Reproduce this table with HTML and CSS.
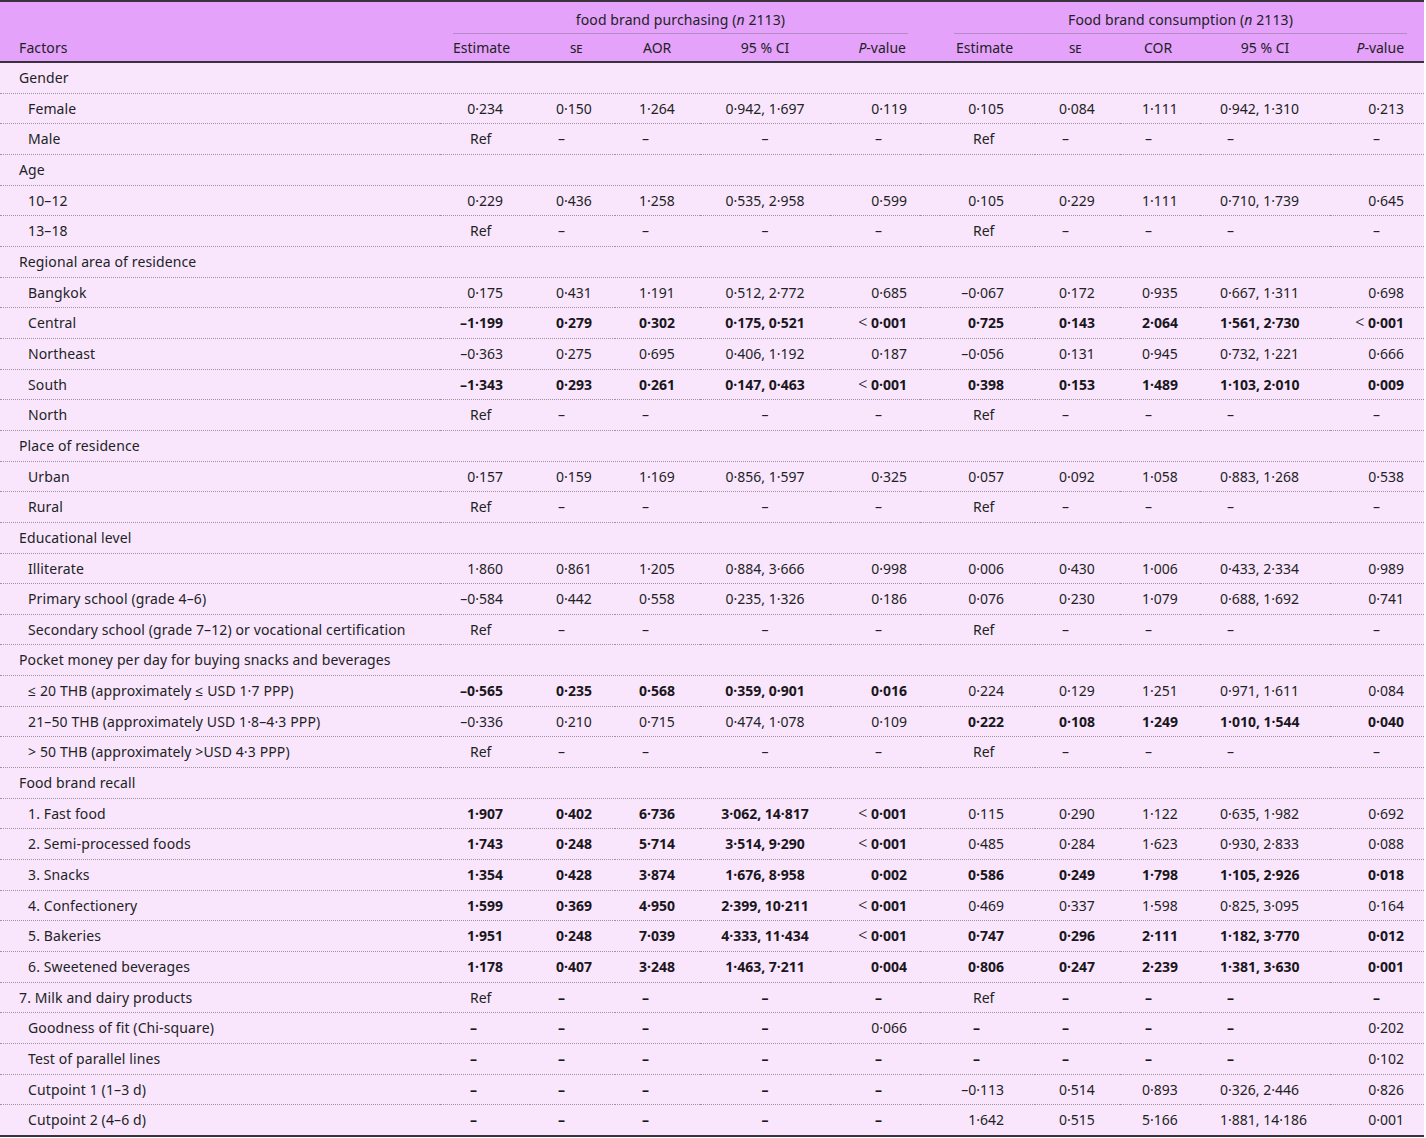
FILE: index.html
```html
<!DOCTYPE html>
<html lang="en">
<head>
<meta charset="utf-8">
<title>Factors associated with food brand purchasing and consumption</title>
<link rel="stylesheet" href="styles.css">
</head>
<body>
<table class="tbl">
<colgroup>
<col class="w-f"><col class="w-e1"><col class="w-s1"><col class="w-a1"><col class="w-c1"><col class="w-p1"><col class="w-g"><col class="w-e2"><col class="w-s2"><col class="w-a2"><col class="w-c2"><col class="w-p2">
</colgroup>
<thead>
<tr class="h1">
<th></th>
<th colspan="5" class="grp"><div class="grp-in g1">food brand purchasing (<i>n</i> 2113)</div></th>
<th></th>
<th colspan="5" class="grp"><div class="grp-in g2">Food brand consumption (<i>n</i> 2113)</div></th>
</tr>
<tr class="h2">
<th class="f hl">Factors</th>
<th class="he1">Estimate</th>
<th class="hs1"><span class="sc">se</span></th>
<th class="ha1">AOR</th>
<th class="hc">95 % CI</th>
<th class="hp1"><i>P</i>-value</th>
<th></th>
<th class="he2">Estimate</th>
<th class="hs2"><span class="sc">se</span></th>
<th class="ha2">COR</th>
<th class="hc">95 % CI</th>
<th class="hp2"><i>P</i>-value</th>
</tr>
</thead>
<tbody>
<tr><td class="f" colspan="12">Gender</td></tr>
<tr><td class="f i">Female</td><td class="e1">0·234</td><td class="s1">0·150</td><td class="a1">1·264</td><td class="c1">0·942, 1·697</td><td class="p1">0·119</td><td></td><td class="e2">0·105</td><td class="s2">0·084</td><td class="a2">1·111</td><td class="c2">0·942, 1·310</td><td class="p2">0·213</td></tr>
<tr><td class="f i">Male</td><td class="e1 d">Ref</td><td class="s1 d">–</td><td class="a1 d">–</td><td class="c1">–</td><td class="p1 d">–</td><td></td><td class="e2 d">Ref</td><td class="s2 d">–</td><td class="a2 d">–</td><td class="c2 d">–</td><td class="p2 d">–</td></tr>
<tr><td class="f" colspan="12">Age</td></tr>
<tr><td class="f i">10–12</td><td class="e1">0·229</td><td class="s1">0·436</td><td class="a1">1·258</td><td class="c1">0·535, 2·958</td><td class="p1">0·599</td><td></td><td class="e2">0·105</td><td class="s2">0·229</td><td class="a2">1·111</td><td class="c2">0·710, 1·739</td><td class="p2">0·645</td></tr>
<tr><td class="f i">13–18</td><td class="e1 d">Ref</td><td class="s1 d">–</td><td class="a1 d">–</td><td class="c1">–</td><td class="p1 d">–</td><td></td><td class="e2 d">Ref</td><td class="s2 d">–</td><td class="a2 d">–</td><td class="c2 d">–</td><td class="p2 d">–</td></tr>
<tr><td class="f" colspan="12">Regional area of residence</td></tr>
<tr><td class="f i">Bangkok</td><td class="e1">0·175</td><td class="s1">0·431</td><td class="a1">1·191</td><td class="c1">0·512, 2·772</td><td class="p1">0·685</td><td></td><td class="e2">–0·067</td><td class="s2">0·172</td><td class="a2">0·935</td><td class="c2">0·667, 1·311</td><td class="p2">0·698</td></tr>
<tr class="b"><td class="f i">Central</td><td class="e1">–1·199</td><td class="s1">0·279</td><td class="a1">0·302</td><td class="c1">0·175, 0·521</td><td class="p1"><span class="lt">&lt;</span> 0·001</td><td></td><td class="e2">0·725</td><td class="s2">0·143</td><td class="a2">2·064</td><td class="c2">1·561, 2·730</td><td class="p2"><span class="lt">&lt;</span> 0·001</td></tr>
<tr><td class="f i">Northeast</td><td class="e1">–0·363</td><td class="s1">0·275</td><td class="a1">0·695</td><td class="c1">0·406, 1·192</td><td class="p1">0·187</td><td></td><td class="e2">–0·056</td><td class="s2">0·131</td><td class="a2">0·945</td><td class="c2">0·732, 1·221</td><td class="p2">0·666</td></tr>
<tr class="b"><td class="f i">South</td><td class="e1">–1·343</td><td class="s1">0·293</td><td class="a1">0·261</td><td class="c1">0·147, 0·463</td><td class="p1"><span class="lt">&lt;</span> 0·001</td><td></td><td class="e2">0·398</td><td class="s2">0·153</td><td class="a2">1·489</td><td class="c2">1·103, 2·010</td><td class="p2">0·009</td></tr>
<tr><td class="f i">North</td><td class="e1 d">Ref</td><td class="s1 d">–</td><td class="a1 d">–</td><td class="c1">–</td><td class="p1 d">–</td><td></td><td class="e2 d">Ref</td><td class="s2 d">–</td><td class="a2 d">–</td><td class="c2 d">–</td><td class="p2 d">–</td></tr>
<tr><td class="f" colspan="12">Place of residence</td></tr>
<tr><td class="f i">Urban</td><td class="e1">0·157</td><td class="s1">0·159</td><td class="a1">1·169</td><td class="c1">0·856, 1·597</td><td class="p1">0·325</td><td></td><td class="e2">0·057</td><td class="s2">0·092</td><td class="a2">1·058</td><td class="c2">0·883, 1·268</td><td class="p2">0·538</td></tr>
<tr><td class="f i">Rural</td><td class="e1 d">Ref</td><td class="s1 d">–</td><td class="a1 d">–</td><td class="c1">–</td><td class="p1 d">–</td><td></td><td class="e2 d">Ref</td><td class="s2 d">–</td><td class="a2 d">–</td><td class="c2 d">–</td><td class="p2 d">–</td></tr>
<tr><td class="f" colspan="12">Educational level</td></tr>
<tr><td class="f i">Illiterate</td><td class="e1">1·860</td><td class="s1">0·861</td><td class="a1">1·205</td><td class="c1">0·884, 3·666</td><td class="p1">0·998</td><td></td><td class="e2">0·006</td><td class="s2">0·430</td><td class="a2">1·006</td><td class="c2">0·433, 2·334</td><td class="p2">0·989</td></tr>
<tr><td class="f i">Primary school (grade 4–6)</td><td class="e1">–0·584</td><td class="s1">0·442</td><td class="a1">0·558</td><td class="c1">0·235, 1·326</td><td class="p1">0·186</td><td></td><td class="e2">0·076</td><td class="s2">0·230</td><td class="a2">1·079</td><td class="c2">0·688, 1·692</td><td class="p2">0·741</td></tr>
<tr><td class="f i">Secondary school (grade 7–12) or vocational certification</td><td class="e1 d">Ref</td><td class="s1 d">–</td><td class="a1 d">–</td><td class="c1">–</td><td class="p1 d">–</td><td></td><td class="e2 d">Ref</td><td class="s2 d">–</td><td class="a2 d">–</td><td class="c2 d">–</td><td class="p2 d">–</td></tr>
<tr><td class="f" colspan="12">Pocket money per day for buying snacks and beverages</td></tr>
<tr><td class="f i">≤ 20 THB (approximately ≤ USD 1·7 PPP)</td><td class="e1 b">–0·565</td><td class="s1 b">0·235</td><td class="a1 b">0·568</td><td class="c1 b">0·359, 0·901</td><td class="p1 b">0·016</td><td></td><td class="e2">0·224</td><td class="s2">0·129</td><td class="a2">1·251</td><td class="c2">0·971, 1·611</td><td class="p2">0·084</td></tr>
<tr><td class="f i">21–50 THB (approximately USD 1·8–4·3 PPP)</td><td class="e1">–0·336</td><td class="s1">0·210</td><td class="a1">0·715</td><td class="c1">0·474, 1·078</td><td class="p1">0·109</td><td></td><td class="e2 b">0·222</td><td class="s2 b">0·108</td><td class="a2 b">1·249</td><td class="c2 b">1·010, 1·544</td><td class="p2 b">0·040</td></tr>
<tr><td class="f i">&gt; 50 THB (approximately &gt;USD 4·3 PPP)</td><td class="e1 d">Ref</td><td class="s1 d">–</td><td class="a1 d">–</td><td class="c1">–</td><td class="p1 d">–</td><td></td><td class="e2 d">Ref</td><td class="s2 d">–</td><td class="a2 d">–</td><td class="c2 d">–</td><td class="p2 d">–</td></tr>
<tr><td class="f" colspan="12">Food brand recall</td></tr>
<tr><td class="f i">1. Fast food</td><td class="e1 b">1·907</td><td class="s1 b">0·402</td><td class="a1 b">6·736</td><td class="c1 b">3·062, 14·817</td><td class="p1 b"><span class="lt">&lt;</span> 0·001</td><td></td><td class="e2">0·115</td><td class="s2">0·290</td><td class="a2">1·122</td><td class="c2">0·635, 1·982</td><td class="p2">0·692</td></tr>
<tr><td class="f i">2. Semi-processed foods</td><td class="e1 b">1·743</td><td class="s1 b">0·248</td><td class="a1 b">5·714</td><td class="c1 b">3·514, 9·290</td><td class="p1 b"><span class="lt">&lt;</span> 0·001</td><td></td><td class="e2">0·485</td><td class="s2">0·284</td><td class="a2">1·623</td><td class="c2">0·930, 2·833</td><td class="p2">0·088</td></tr>
<tr class="b"><td class="f i">3. Snacks</td><td class="e1">1·354</td><td class="s1">0·428</td><td class="a1">3·874</td><td class="c1">1·676, 8·958</td><td class="p1">0·002</td><td></td><td class="e2">0·586</td><td class="s2">0·249</td><td class="a2">1·798</td><td class="c2">1·105, 2·926</td><td class="p2">0·018</td></tr>
<tr><td class="f i">4. Confectionery</td><td class="e1 b">1·599</td><td class="s1 b">0·369</td><td class="a1 b">4·950</td><td class="c1 b">2·399, 10·211</td><td class="p1 b"><span class="lt">&lt;</span> 0·001</td><td></td><td class="e2">0·469</td><td class="s2">0·337</td><td class="a2">1·598</td><td class="c2">0·825, 3·095</td><td class="p2">0·164</td></tr>
<tr class="b"><td class="f i">5. Bakeries</td><td class="e1">1·951</td><td class="s1">0·248</td><td class="a1">7·039</td><td class="c1">4·333, 11·434</td><td class="p1"><span class="lt">&lt;</span> 0·001</td><td></td><td class="e2">0·747</td><td class="s2">0·296</td><td class="a2">2·111</td><td class="c2">1·182, 3·770</td><td class="p2">0·012</td></tr>
<tr class="b"><td class="f i">6. Sweetened beverages</td><td class="e1">1·178</td><td class="s1">0·407</td><td class="a1">3·248</td><td class="c1">1·463, 7·211</td><td class="p1">0·004</td><td></td><td class="e2">0·806</td><td class="s2">0·247</td><td class="a2">2·239</td><td class="c2">1·381, 3·630</td><td class="p2">0·001</td></tr>
<tr><td class="f">7. Milk and dairy products</td><td class="e1 d">Ref</td><td class="s1 d x">–</td><td class="a1 d x">–</td><td class="c1 x">–</td><td class="p1 d x">–</td><td></td><td class="e2 d">Ref</td><td class="s2 d x">–</td><td class="a2 d x">–</td><td class="c2 d x">–</td><td class="p2 d x">–</td></tr>
<tr><td class="f i">Goodness of fit (Chi-square)</td><td class="e1 d x">–</td><td class="s1 d x">–</td><td class="a1 d x">–</td><td class="c1 x">–</td><td class="p1">0·066</td><td></td><td class="e2 d x">–</td><td class="s2 d x">–</td><td class="a2 d x">–</td><td class="c2 d x">–</td><td class="p2">0·202</td></tr>
<tr><td class="f i">Test of parallel lines</td><td class="e1 d x">–</td><td class="s1 d x">–</td><td class="a1 d x">–</td><td class="c1 x">–</td><td class="p1 d x">–</td><td></td><td class="e2 d x">–</td><td class="s2 d x">–</td><td class="a2 d x">–</td><td class="c2 d x">–</td><td class="p2">0·102</td></tr>
<tr><td class="f i">Cutpoint 1 (1–3 d)</td><td class="e1 d x">–</td><td class="s1 d x">–</td><td class="a1 d x">–</td><td class="c1 x">–</td><td class="p1 d x">–</td><td></td><td class="e2">–0·113</td><td class="s2">0·514</td><td class="a2">0·893</td><td class="c2">0·326, 2·446</td><td class="p2">0·826</td></tr>
<tr class="last"><td class="f i">Cutpoint 2 (4–6 d)</td><td class="e1 d x">–</td><td class="s1 d x">–</td><td class="a1 d x">–</td><td class="c1 x">–</td><td class="p1 d x">–</td><td></td><td class="e2">1·642</td><td class="s2">0·515</td><td class="a2">5·166</td><td class="c2">1·881, 14·186</td><td class="p2">0·001</td></tr>
</tbody>
</table>
</body>
</html>
```
FILE: styles.css
```css
html, body {
  margin: 0;
  padding: 0;
  background: #ffffff;
}
body {
  font-family: "Noto Sans", "Open Sans", "DejaVu Sans", sans-serif;
  font-size: 14px;
  color: #231f24;
}
.tbl {
  width: 1424px;
  table-layout: fixed;
  border-collapse: separate;
  border-spacing: 0;
  background: #f9e6fd;
  border-top: 2px solid #3a333d;
  border-bottom: 2px solid #3a333d;
}
.w-f { width: 440px; }
.w-e1 { width: 90px; }
.w-s1 { width: 85px; }
.w-a1 { width: 85px; }
.w-c1 { width: 130px; }
.w-p1 { width: 90px; }
.w-g { width: 20px; }
.w-e2 { width: 95px; }
.w-s2 { width: 85px; }
.w-a2 { width: 80px; }
.w-c2 { width: 130px; }
.w-p2 { width: 94px; }

thead th {
  background: #e4a2fb;
  font-weight: 400;
  line-height: 20px;
  padding: 0;
  white-space: nowrap;
  text-align: left;
}
.h1 th { padding-top: 8px; padding-bottom: 0; }
.grp { text-align: center; letter-spacing: 0.1px; }
.grp-in {
  padding-bottom: 3px;
  border-bottom: 1px solid #b58ac6;
}
.g1 { margin: 0 12px 0 13px; }
.g2 { margin: 0 17px 0 14px; }
.h2 th {
  padding-top: 4px;
  padding-bottom: 3px;
  border-bottom: 2px solid #3a333d;
}
.sc { font-variant: small-caps; }
.h2 .hl { padding-left: 19px; letter-spacing: 0.12px; }
.he1 { padding-left: 13px !important; }
.hs1 { padding-left: 40px !important; }
.ha1 { padding-left: 28px !important; }
.hc { text-align: center !important; }
.hp1 { text-align: right !important; padding-right: 14px !important; }
.he2 { padding-left: 16px !important; }
.hs2 { padding-left: 34px !important; }
.ha2 { padding-left: 24px !important; }
.hp2 { text-align: right !important; padding-right: 20px !important; }

tbody td {
  padding: 5px 0 5px;
  line-height: 19.65px;
  border-bottom: 1px dotted #9d94a2;
  white-space: nowrap;
  text-align: left;
}
tbody tr.last td { border-bottom: 0; }
td.f { padding-left: 19px; letter-spacing: 0.12px; }
td.f.i { padding-left: 28px; }

.e1 { text-align: right !important; padding-right: 27px !important; }
.e1.d { text-align: left !important; padding-left: 30px; padding-right: 0 !important; }
.s1 { padding-left: 26px; }
.s1.d { padding-left: 28px; }
.a1 { padding-left: 24px; }
.a1.d { padding-left: 27px; }
.c1 { text-align: center !important; }
.p1 { text-align: right !important; padding-right: 13px !important; }
.p1.d { text-align: left !important; padding-left: 45px; padding-right: 0 !important; }
.e2 { text-align: right !important; padding-right: 31px !important; }
.e2.d { text-align: left !important; padding-left: 33px; padding-right: 0 !important; }
.s2 { padding-left: 24px; }
.s2.d { padding-left: 27px; }
.a2 { padding-left: 22px; }
.a2.d { padding-left: 25px; }
.c2 { padding-left: 20px; }
.c2.d { padding-left: 27px; }
.p2 { text-align: right !important; padding-right: 20px !important; }
.p2.d { text-align: left !important; padding-left: 43px; padding-right: 0 !important; }

tr.b td, td.b, td.x { font-weight: 700; color: #1a161b; }
tr.b td.f { font-weight: 400; color: #231f24; }
.lt {
  font-weight: 300;
  font-size: 16px;
  line-height: 0;
}
```
